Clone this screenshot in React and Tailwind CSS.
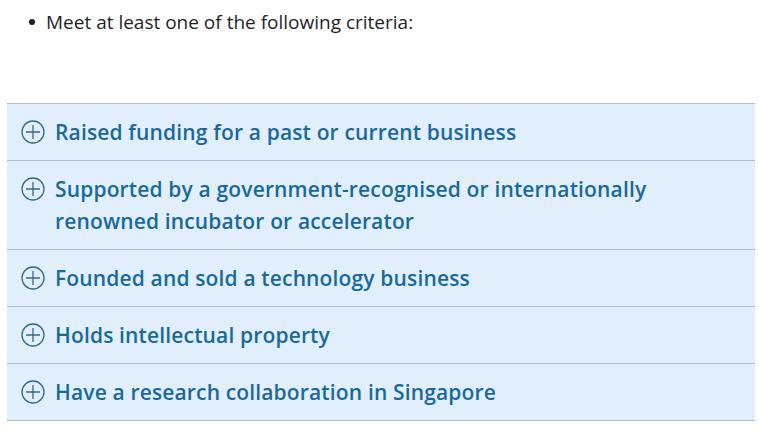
import { useState } from 'react';

const criteria = [
  'Raised funding for a past or current business',
  'Supported by a government-recognised or internationally renowned incubator or accelerator',
  'Founded and sold a technology business',
  'Holds intellectual property',
  'Have a research collaboration in Singapore',
];

function PlusCircle() {
  return (
    <svg width="24" height="24" viewBox="0 0 24 24" fill="none" stroke="#33698c" strokeWidth="1.3" className="shrink-0 mt-1">
      <circle cx="12" cy="12" r="11" />
      <path d="M12 5v14M5 12h14" />
    </svg>
  );
}

export default function App() {
  const [open, setOpen] = useState(null);

  return (
    <div className="min-h-screen bg-white" style={{ fontFamily: '"Open Sans", sans-serif' }}>
      <ul className="pl-[29px] pt-[8px] list-none">
        <li className="flex items-center gap-[11px] text-[19px] leading-[28px] text-[#1f1f1f]">
          <span className="w-[6px] h-[6px] rounded-full bg-[#1f1f1f]" />
          Meet at least one of the following criteria:
        </li>
      </ul>

      <div className="mt-[67px] mx-[7px] w-[748px] border-t border-[#b4bcc6] bg-[#e1effc]">
        {criteria.map((c, i) => (
          <button
            key={i}
            onClick={() => setOpen(open === i ? null : i)}
            className="w-full flex items-start gap-[10px] pl-[14px] pr-[24px] py-3 border-b border-[#b4bcc6] text-left"
          >
            <PlusCircle />
            <span className="text-[21px] leading-[32px] tracking-[0.15px] font-semibold text-[#1a699a]">{c}</span>
          </button>
        ))}
      </div>
    </div>
  );
}
